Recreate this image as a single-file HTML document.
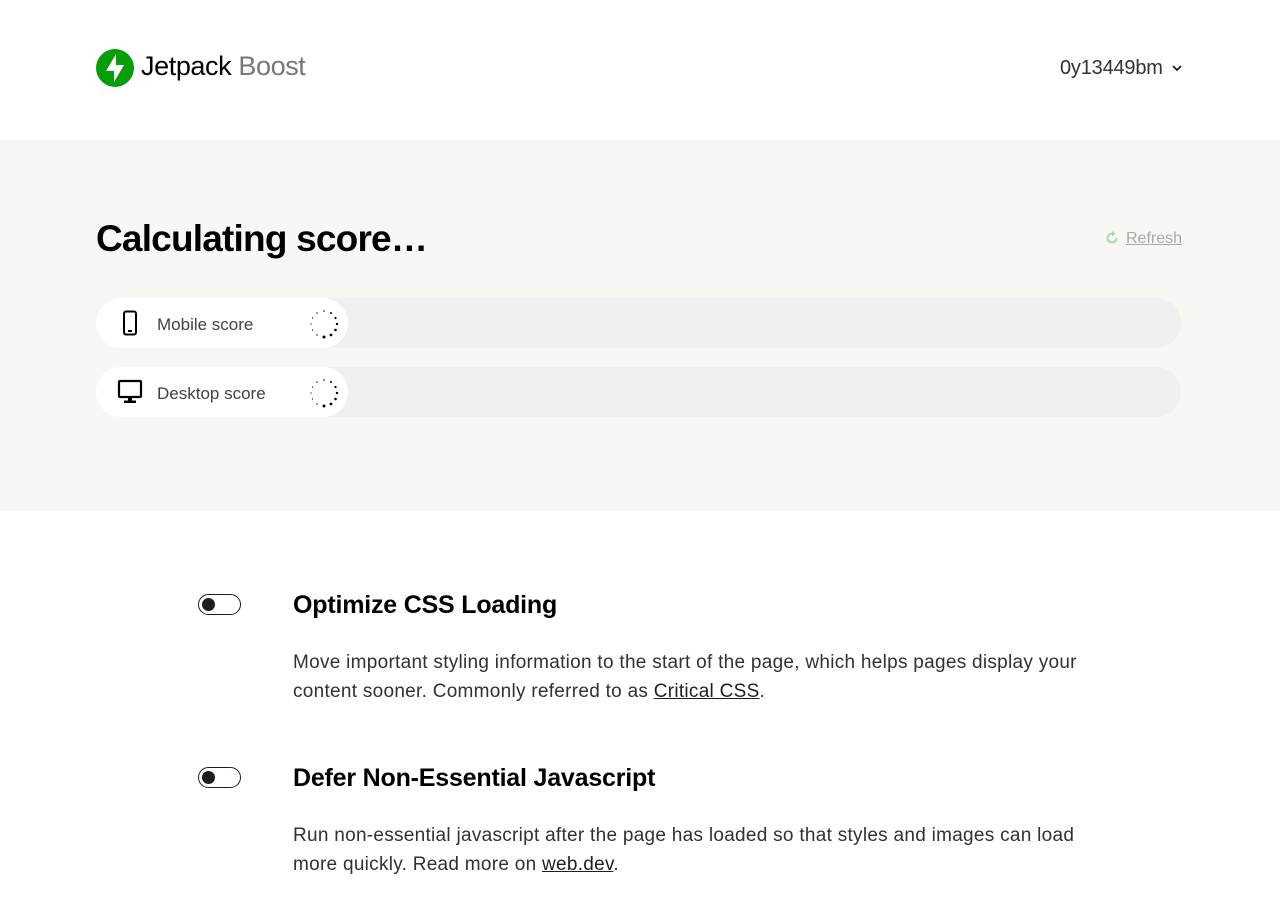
<!DOCTYPE html>
<html><head><meta charset="utf-8"><style>
*{margin:0;padding:0;box-sizing:border-box}
body{width:1280px;height:906px;background:#fff;font-family:"Liberation Sans",sans-serif;color:#1e1e1e;overflow:hidden;position:relative}
.abs{position:absolute}
.hdr-logo{left:96px;top:48px}
.bg{left:0;top:140px;width:1280px;height:371px;background:#f7f8f4}
.bar{left:96px;width:1085px;height:50px;background:#f0f0f0;border-radius:25px}
.pill{left:96px;width:252px;height:50px;background:#fff;border-radius:25px}
.lbl{left:157px;font-size:17px;color:#3c434a}
.tog{width:43px;height:21px;border:1.5px solid #1e1e1e;border-radius:11px;left:198px}
.tog::after{content:"";position:absolute;left:3px;top:2.5px;width:13px;height:13px;border-radius:50%;background:#1e1e1e}
h3{position:absolute;left:293px;font-size:25px;font-weight:bold;color:#000;letter-spacing:-0.2px}
p{position:absolute;left:293px;width:820px;font-size:19px;line-height:29px;color:#2c3338;letter-spacing:0.28px}
a{color:#1e1e1e;text-decoration:underline}
</style></head><body>
<svg class="abs hdr-logo" width="40" height="40" viewBox="0 0 40 40"><circle cx="19" cy="20" r="19" fill="#069e08"/><polygon points="20,6 20,23 10,23" fill="#fff"/><polygon points="18,34 18,17 28,17" fill="#fff"/></svg>
<div class="abs" style="left:141px;top:51px;font-size:27px;letter-spacing:-0.4px"><span style="color:#000">Jetpack</span><span style="color:#777"> Boost</span></div>
<div class="abs" style="left:1060px;top:57px;font-size:20px;color:#2c3338;letter-spacing:-0.2px">0y13449bm</div>
<svg class="abs" style="left:1171px;top:63px" width="12" height="10" viewBox="0 0 12 10"><path d="M2 3l4 4 4-4" fill="none" stroke="#1e1e1e" stroke-width="1.8"/></svg>
<div class="abs bg"></div>
<div class="abs" style="left:96px;top:218px;font-size:37px;font-weight:bold;color:#000;letter-spacing:-0.8px">Calculating score…</div>
<svg class="abs" style="left:1105px;top:231px" width="14" height="14" viewBox="0 0 14 14"><path d="M11.5 7A4.5 4.5 0 1 1 8 2.6" fill="none" stroke="#a7d8a8" stroke-width="1.8"/><path d="M7 0l3.5 2.8L7 5.5z" fill="#a7d8a8"/></svg>
<div class="abs" style="left:1126px;top:230px;font-size:16px;color:#a7aaad;text-decoration:underline">Refresh</div>

<div class="abs bar" style="top:298px"></div>
<div class="abs pill" style="top:298px"></div>
<svg class="abs" style="left:121px;top:310px" width="18" height="26" viewBox="0 0 18 26"><rect x="3" y="1.5" width="12" height="23" rx="2" fill="none" stroke="#000" stroke-width="2"/><rect x="7" y="20" width="4" height="2" fill="#000"/></svg>
<div class="abs lbl" style="top:315px">Mobile score</div>
<div class="abs bar" style="top:367px"></div>
<div class="abs pill" style="top:367px"></div>
<svg class="abs" style="left:117px;top:379px" width="26" height="26" viewBox="0 0 26 26"><rect x="2" y="2" width="22" height="16" rx="1" fill="none" stroke="#000" stroke-width="2.2"/><rect x="11" y="18" width="4" height="4" fill="#000"/><rect x="7" y="21.5" width="12" height="2.5" fill="#000"/></svg>
<div class="abs lbl" style="top:384px">Desktop score</div>
<svg class="abs" style="left:309px;top:309px" width="30" height="30" viewBox="0 0 30 30"><g fill="#000"><circle cx="15" cy="2" r=".8"/><circle cx="22" cy="4" r="1"/><circle cx="26.5" cy="9" r="1.1"/><circle cx="28" cy="15" r="1.2"/><circle cx="26.5" cy="21" r="1.3"/><circle cx="22" cy="26" r="1.4"/><circle cx="15" cy="28" r="1.5"/><circle cx="8" cy="26" r=".7"/><circle cx="3.5" cy="21" r=".6"/><circle cx="2" cy="15" r=".6"/><circle cx="3.5" cy="9" r=".6"/><circle cx="8" cy="4" r=".7"/></g></svg>
<svg class="abs" style="left:309px;top:378px" width="30" height="30" viewBox="0 0 30 30"><g fill="#000"><circle cx="15" cy="2" r=".8"/><circle cx="22" cy="4" r="1"/><circle cx="26.5" cy="9" r="1.1"/><circle cx="28" cy="15" r="1.2"/><circle cx="26.5" cy="21" r="1.3"/><circle cx="22" cy="26" r="1.4"/><circle cx="15" cy="28" r="1.5"/><circle cx="8" cy="26" r=".7"/><circle cx="3.5" cy="21" r=".6"/><circle cx="2" cy="15" r=".6"/><circle cx="3.5" cy="9" r=".6"/><circle cx="8" cy="4" r=".7"/></g></svg>

<div class="abs tog" style="top:594px"></div>
<h3 style="top:591px">Optimize CSS Loading</h3>
<p style="top:648px">Move important styling information to the start of the page, which helps pages display your content sooner. Commonly referred to as <a>Critical CSS</a>.</p>
<div class="abs tog" style="top:767px"></div>
<h3 style="top:764px">Defer Non-Essential Javascript</h3>
<p style="top:821px">Run non-essential javascript after the page has loaded so that styles and images can load more quickly. Read more on <a>web.dev</a>.</p>
</body></html>
